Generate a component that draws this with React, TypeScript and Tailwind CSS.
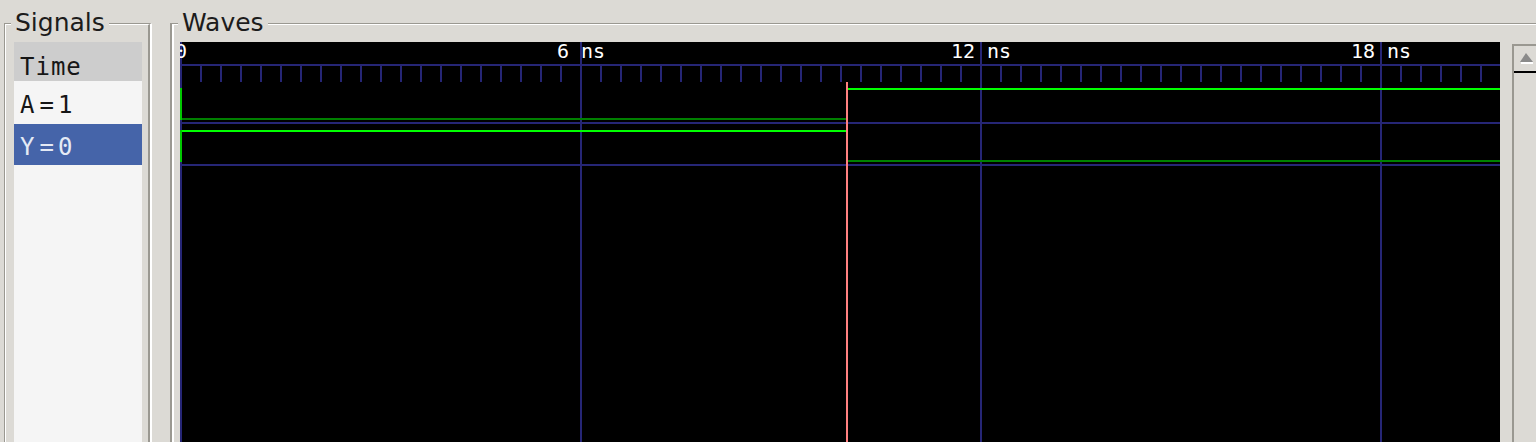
import React from 'react';

const GRID = '#262676';
const HIGH = '#00ff00';
const LOW = '#008000';
const TRANS = '#00c800';
const MARK = '#ff8080';

const ticks = Array.from({ length: 67 }, (_, i) => i * 20);
const majors = [
  { x: 0, label: '0' },
  { x: 400, label: '6 ns' },
  { x: 800, label: '12 ns' },
  { x: 1200, label: '18 ns' },
];

function WaveCanvas() {
  return (
    <svg width={1320} height={400} className="block shrink-0 bg-black" style={{ overflow: 'hidden' }}>
      {/* time axis */}
      <rect x={0} y={22} width={1320} height={2} fill={GRID} />
      {ticks.map((x) => (
        <rect key={x} x={x} y={24} width={2} height={16} fill={GRID} />
      ))}
      {majors.map((m) => (
        <rect key={m.x} x={m.x} y={0} width={2} height={400} fill={GRID} />
      ))}
      {majors.map((m) => (
        <text
          key={'t' + m.x}
          x={m.x + 1}
          y={16}
          textAnchor="middle"
          fill="#ffffff"
          fontFamily="'DejaVu Sans Mono', monospace"
          fontSize={20}
        >
          {m.label}
        </text>
      ))}

      {/* row separators */}
      <rect x={0} y={80} width={1320} height={2} fill={GRID} />
      <rect x={0} y={122} width={1320} height={2} fill={GRID} />

      {/* A */}
      <rect x={0} y={46} width={2} height={32} fill={TRANS} />
      <rect x={2} y={76} width={664} height={2} fill={LOW} />
      <rect x={666} y={46} width={2} height={32} fill={TRANS} />
      <rect x={668} y={46} width={652} height={2} fill={HIGH} />

      {/* Y */}
      <rect x={0} y={88} width={2} height={32} fill={TRANS} />
      <rect x={2} y={88} width={664} height={2} fill={HIGH} />
      <rect x={666} y={88} width={2} height={32} fill={TRANS} />
      <rect x={668} y={118} width={652} height={2} fill={LOW} />

      {/* marker */}
      <rect x={666} y={40} width={2} height={360} fill={MARK} />
    </svg>
  );
}

function SignalRow({ name, value, selected }: { name: string; value: string; selected?: boolean }) {
  return (
    <div
      className={`flex pl-[6px] leading-[24px] ${
        selected ? 'mt-px h-[41px] pt-[11px] bg-[#4564a9] text-[#e4eaf5]' : 'h-[42px] pt-[12px] text-[#161616]'
      }`}
    >
      <span>{name}</span>
      <span className="ml-[4px]">=</span>
      <span className="ml-[3px]">{value}</span>
    </div>
  );
}

export default function App() {
  return (
    <div className="w-[1536px] h-[442px] overflow-hidden bg-[#dcdad5] flex pt-[23px] pl-[4px]">
      {/* Signals frame */}
      <div className="relative w-[148px] shrink-0 border-l border-t border-r-2 border-l-[#9a9891] border-t-[#9a9891] border-r-white">
        <span className="absolute left-[6px] top-[-14px] px-[4px] bg-[#dcdad5] text-[25px] leading-[25px] text-[#1c1c1c] font-['DejaVu_Sans',sans-serif]">
          Signals
        </span>
        <div className="h-full border-l border-t border-r-2 border-l-white border-t-white border-r-[#9a9891] pl-[8px] pr-[6px] pt-[17px]">
          <div className="h-full bg-[#f5f5f5] text-[24px] tracking-[1px] font-['DejaVu_Sans_Mono',monospace]">
            <div className="h-[39px] pt-[13px] pl-[6px] leading-[24px] bg-[#cdcdcd] text-[#161616]">Time</div>
            <SignalRow name="A" value="1" />
            <SignalRow name="Y" value="0" selected />
          </div>
        </div>
      </div>

      {/* Waves frame */}
      <div className="relative ml-[18px] w-[1400px] shrink-0 border-l-2 border-t border-l-[#9a9891] border-t-[#9a9891]">
        <span className="absolute left-[6px] top-[-14px] px-[4px] bg-[#dcdad5] text-[25px] leading-[25px] text-[#1c1c1c] font-['DejaVu_Sans',sans-serif]">
          Waves
        </span>
        <div className="h-full flex border-l-2 border-t border-l-white border-t-white pl-[6px] pt-[17px]">
          <WaveCanvas />
          {/* vertical scrollbar */}
          <div className="ml-[12px] mt-[2px] w-[40px] shrink-0 flex flex-col border-l-2 border-t-2 border-[#9a9891]">
            <div className="h-[27px] border-b-2 border-black">
              <svg width={22} height={25} className="block">
                <polygon points="12,7 6,16 19,16" fill="#8a8a8a" />
                <rect x={7} y={16} width={12} height={2} fill="#ffffff" />
              </svg>
            </div>
            <div className="flex-1 bg-[#dcdad5]" />
          </div>
        </div>
      </div>
    </div>
  );
}
